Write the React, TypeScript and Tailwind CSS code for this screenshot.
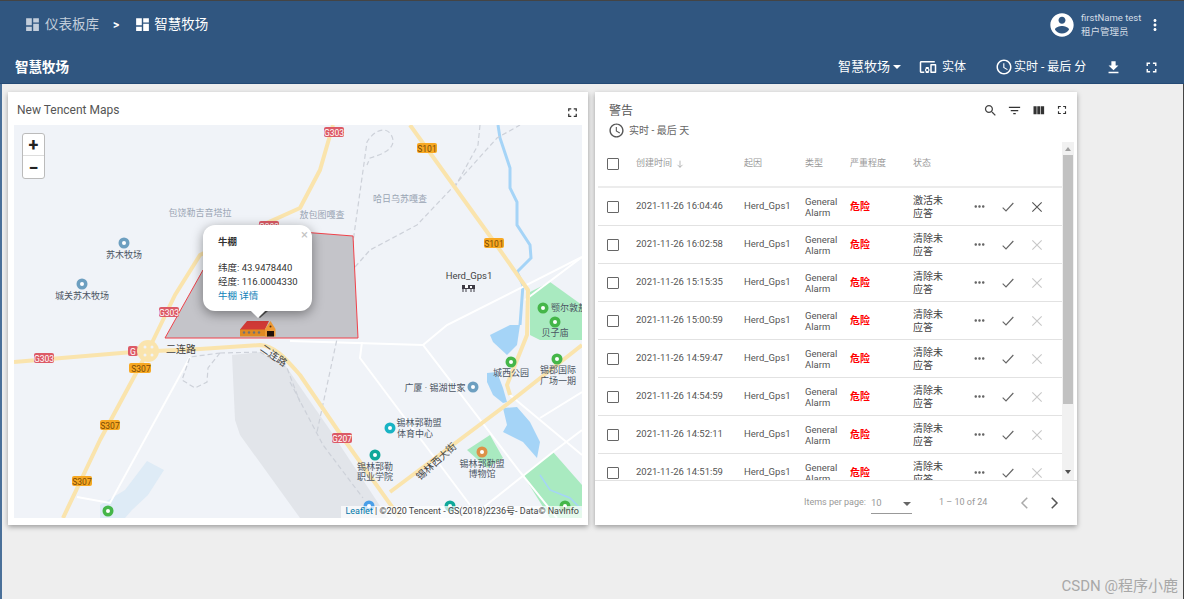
const P = {
  dashboard: "M3 13h8V3H3v10zm0 8h8v-6H3v6zm10 0h8V11h-8v10zm0-18v6h8V3h-8z",
  account: "M12 2C6.48 2 2 6.48 2 12s4.48 10 10 10 10-4.48 10-10S17.52 2 12 2zm0 3c1.66 0 3 1.34 3 3s-1.34 3-3 3-3-1.34-3-3 1.34-3 3-3zm0 14.2c-2.5 0-4.71-1.28-6-3.22.03-1.99 4-3.08 6-3.08 1.99 0 5.97 1.09 6 3.08-1.29 1.94-3.5 3.22-6 3.22z",
  moreVert: "M12 8c1.1 0 2-.9 2-2s-.9-2-2-2-2 .9-2 2 .9 2 2 2zm0 2c-1.1 0-2 .9-2 2s.9 2 2 2 2-.9 2-2-.9-2-2-2zm0 6c-1.1 0-2 .9-2 2s.9 2 2 2 2-.9 2-2-.9-2-2-2z",
  devices: "M3 6h18V4H3c-1.1 0-2 .9-2 2v12c0 1.1.9 2 2 2h4v-2H3V6zm10 6H9v1.78c-.61.55-1 1.33-1 2.22s.39 1.67 1 2.22V20h4v-1.78c.61-.55 1-1.34 1-2.22s-.39-1.67-1-2.22V12zm-2 5.5c-.83 0-1.5-.67-1.5-1.5s.67-1.5 1.5-1.5 1.5.67 1.5 1.5-.67 1.5-1.5 1.5zM22 8h-6c-.5 0-1 .5-1 1v10c0 .5.5 1 1 1h6c.5 0 1-.5 1-1V9c0-.5-.5-1-1-1zm-1 10h-4v-8h4v8z",
  clock: "M11.99 2C6.47 2 2 6.48 2 12s4.47 10 9.99 10C17.52 22 22 17.52 22 12S17.52 2 11.99 2zM12 20c-4.42 0-8-3.58-8-8s3.58-8 8-8 8 3.58 8 8-3.58 8-8 8zm.5-13H11v6l5.25 3.15.75-1.23-4.5-2.67z",
  download: "M19 9h-4V3H9v6H5l7 7 7-7zM5 18v2h14v-2H5z",
  fullscreen: "M7 14H5v5h5v-2H7v-3zm-2-4h2V7h3V5H5v5zm12 7h-3v2h5v-5h-2v3zM14 5v2h3v3h2V5h-5z",
  search: "M15.5 14h-.79l-.28-.27C15.41 12.59 16 11.11 16 9.5 16 5.91 13.09 3 9.5 3S3 5.91 3 9.5 5.91 16 9.5 16c1.61 0 3.09-.59 4.23-1.57l.27.28v.79l5 4.99L20.49 19l-4.99-5zm-6 0C7.01 14 5 11.99 5 9.5S7.01 5 9.5 5 14 7.01 14 9.5 11.99 14 9.5 14z",
  filter: "M10 18h4v-2h-4v2zM3 6v2h18V6H3zm3 7h12v-2H6v2z",
  columns: "M10 18h5V5h-5v13zm-6 0h5V5H4v13zM16 5v13h5V5h-5z",
  moreHoriz: "M6 10c-1.1 0-2 .9-2 2s.9 2 2 2 2-.9 2-2-.9-2-2-2zm12 0c-1.1 0-2 .9-2 2s.9 2 2 2 2-.9 2-2-.9-2-2-2zm-6 0c-1.1 0-2 .9-2 2s.9 2 2 2 2-.9 2-2-.9-2-2-2z",
};

const Icon = ({ d, className }: { d: string; className: string }) => (
  <svg viewBox="0 0 24 24" fill="currentColor" className={className}>
    <path d={d} />
  </svg>
);

const Line = ({ d, className, sw = 1.4 }: { d: string; className: string; sw?: number }) => (
  <svg viewBox="0 0 24 24" fill="none" stroke="currentColor" strokeWidth={sw} className={className}>
    <path d={d} />
  </svg>
);

const rows = [
  { time: "2021-11-26 16:04:46", status: "激活未应答", active: true },
  { time: "2021-11-26 16:02:58", status: "清除未应答", active: false },
  { time: "2021-11-26 15:15:35", status: "清除未应答", active: false },
  { time: "2021-11-26 15:00:59", status: "清除未应答", active: false },
  { time: "2021-11-26 14:59:47", status: "清除未应答", active: false },
  { time: "2021-11-26 14:54:59", status: "清除未应答", active: false },
  { time: "2021-11-26 14:52:11", status: "清除未应答", active: false },
  { time: "2021-11-26 14:51:59", status: "清除未应答", active: false },
];

const shields: [string, number, number][] = [
  ["G303", 334, 132],
  ["G303", 269, 226],
  ["G303", 169, 312],
  ["G303", 44, 358],
  ["S307", 141, 368],
  ["S307", 110, 425],
  ["S307", 82, 481],
  ["S101", 427, 148],
  ["S101", 494, 243],
  ["G207", 342, 438],
];

const labels: [string, number, number, string][] = [
  ["包饶勒吉音塔拉", 200, 216, "#9aa5b4"],
  ["苏木牧场", 124, 258, "#4b5563"],
  ["城关苏木牧场", 82, 299, "#4b5563"],
  ["敖包图嘎查", 322, 218, "#9aa5b4"],
  ["哈日乌苏嘎查", 400, 202, "#9aa5b4"],
  ["贝子庙", 555, 336, "#4b5563"],
  ["城西公园", 511, 376, "#4b5563"],
  ["锡郡国际", 558, 373, "#4b5563"],
  ["广场一期", 558, 384, "#4b5563"],
  ["广厦 · 锡湖世家", 435, 391, "#4b5563"],
  ["锡林郭勒盟", 419, 426, "#4b5563"],
  ["体育中心", 415, 437, "#4b5563"],
  ["锡林郭勒", 375, 470, "#4b5563"],
  ["职业学院", 375, 480, "#4b5563"],
  ["锡林郭勒盟", 482, 467, "#4b5563"],
  ["博物馆", 482, 477, "#4b5563"],
];

const pins: [number, number, string][] = [
  [124, 243, "#6d9fc0"],
  [82, 284, "#6d9fc0"],
  [543, 308, "#45b649"],
  [555, 322, "#45b649"],
  [511, 362, "#45b649"],
  [557, 359, "#45b649"],
  [473, 387, "#6d9fc0"],
  [390, 428, "#19b3c4"],
  [375, 455, "#0fa89a"],
  [482, 452, "#dd9147"],
  [369, 506, "#4a9fe8"],
  [450, 506, "#0fa89a"],
  [565, 506, "#45b649"],
  [108, 511, "#45b649"],
];

const MapDrawing = () => (
  <svg viewBox="14 125 568 393" className="block w-[568px] h-[393px]">
    <rect x="14" y="125" width="568" height="393" fill="#f0f3f8" />
    <path d="M232 355L260 352L285 365L330 430L388 518L300 518L240 435L235 420Z" fill="#e2e5ea" />
    <path d="M125 490L147 461L164 470L148 495L132 510L125 518L100 518L100 505Z" fill="#deebf6" />
    <path d="M530 292L550 282L582 305L582 340L540 340L530 335Z" fill="#a9eac0" />
    <path d="M523 475L553 452L582 485L582 518L550 518Z" fill="#a9eac0" />
    <path d="M467 450L490 435L503 458L487 468Z" fill="#a9eac0" />
    <g fill="#a5d4f7">
      <path d="M490 335L510 325L520 325L517 345L507 355L493 342Z" />
      <path d="M487 373L497 372L503 388L507 402L503 403L493 395L487 382Z" />
      <path d="M503 408L517 407L530 422L540 442L537 458L523 442L503 432L507 425Z" />
    </g>
    <path d="M498 125L500 138L510 168L510 188L517 202L517 225L530 245L531 258L517 272L523 285L520 325" fill="none" stroke="#a5d4f7" strokeWidth="3" />
    <path d="M540 475L550 490L570 498L582 510" fill="none" stroke="#a5d4f7" strokeWidth="1.5" />
    <g fill="none" stroke="#ffffff" strokeWidth="2">
      <path d="M190 357L110 503L77 497" />
      <path d="M290 341L423 345L520 472L557 518" />
      <path d="M423 345L447 325L582 257" />
      <path d="M362 342L360 358L470 505" />
      <path d="M510 395L582 455" />
      <path d="M470 518L553 452L582 430" />
      <path d="M540 418L582 392" />
      <path d="M525 300L582 257" />
    </g>
    <g fill="none" stroke="#cdd1d9" strokeWidth="1.2" strokeDasharray="5 3">
      <path d="M340 325L353 242L367 142C375 128 390 125 393 140C394 150 380 155 370 158L367 165" />
      <path d="M355 267L370 250L417 225L453 187L497 138L520 125" />
      <path d="M480 125L478 145L455 187" />
      <path d="M340 325L317 432" />
      <path d="M290 382L323 445L363 498" />
      <path d="M220 353L260 352L287 368L300 402" />
      <path d="M220 353L208 368L207 382L195 388L182 380L190 357L220 353" />
    </g>
    <g fill="none" stroke="#fae4ad" strokeWidth="4" strokeLinejoin="round">
      <path d="M14 362L133 352L200 349L260 345C275 346 285 358 300 375L343 438L400 518" />
      <path d="M148 351L175 295L200 255L240 235L300 208L320 170L333 125" />
      <path d="M410 125L495 243L528 290L527 335L507 385L510 395" />
      <path d="M148 351L100 440L63 518" />
      <path d="M390 492L510 402L582 345" />
    </g>
    <rect x="128" y="346" width="10" height="10" rx="2" fill="#dc5a66" />
    <text x="130" y="354.5" fontSize="8.5" fill="#ffffff">G</text>
    <rect x="129" y="363" width="14" height="10" rx="2" fill="#f7a823" />
    <circle cx="148" cy="351" r="11" fill="#fae4ad" />
    <circle cx="145" cy="347" r="1.5" fill="#f0f3f8" />
    <circle cx="152" cy="347" r="1.5" fill="#f0f3f8" />
    <circle cx="145" cy="355" r="1.5" fill="#f0f3f8" />
    <circle cx="152" cy="355" r="1.5" fill="#f0f3f8" />
    <path d="M250 228L353 236L358 338L165 338L203 270Z" fill="#c4c4c9" stroke="#f0424a" strokeWidth="1" />
    {shields.map(([t, x, y], i) => (
      <g key={i}>
        <rect x={x - 10} y={y - 5} width="20" height="10" rx="2" fill={t[0] === "G" ? "#dc5a66" : "#f7a823"} />
        <text x={x} y={y + 3.5} textAnchor="middle" fontSize="8.5" fill={t[0] === "G" ? "#ffffff" : "#7a4a05"}>
          {t}
        </text>
      </g>
    ))}
    {pins.map(([x, y, c], i) => (
      <g key={i}>
        <circle cx={x} cy={y} r="5.5" fill={c} />
        <circle cx={x} cy={y} r="2" fill="#ffffff" />
      </g>
    ))}
    {labels.map(([t, x, y, c], i) => (
      <text key={i} x={x} y={y} textAnchor="middle" fontSize="9" fill={c}>
        {t}
      </text>
    ))}
    <text x="551" y="311" fontSize="9" fill="#4b5563">颚尔敦敖</text>
    <text x="181" y="353" textAnchor="middle" fontSize="10" fill="#444444">二连路</text>
    <text x="274" y="359" textAnchor="middle" fontSize="10" fill="#444444" transform="rotate(35 274 355)">二连路</text>
    <text x="436" y="465" textAnchor="middle" fontSize="10" fill="#444444" transform="rotate(-42 436 461)">锡林西大街</text>
    <text x="469" y="279" textAnchor="middle" fontSize="9.5" fill="#444444">Herd_Gps1</text>
    <g>
      <rect x="462" y="285" width="13" height="4" fill="#3d3a45" />
      <rect x="465" y="285" width="3" height="3" fill="#ffffff" />
      <rect x="470" y="286" width="2" height="2" fill="#ffffff" />
      <path d="M463 289v3M466 289v3M471 289v3M474 289v3" stroke="#3d3a45" strokeWidth="1" />
    </g>
    <g>
      <rect x="240" y="329" width="28" height="7.5" fill="#e08a23" />
      <path d="M240 329.5L247 321L269 321L265 329.5Z" fill="#d13a36" />
      <path d="M265 336.5L265 329L270.5 321L275.5 329L275.5 336.5Z" fill="#ee9a35" />
      <rect x="267" y="331" width="7" height="5.5" fill="#231208" />
      <circle cx="270.5" cy="326.5" r="1" fill="#5a3210" />
      <g fill="#6f7178">
        <circle cx="244" cy="332.5" r="1.2" />
        <circle cx="249" cy="332.5" r="1.2" />
        <circle cx="254" cy="332.5" r="1.2" />
        <circle cx="259" cy="332.5" r="1.2" />
      </g>
    </g>
  </svg>
);

const Header = () => (
  <header className="h-[84px] bg-[#305680] border-t border-[#444444] border-b border-b-[#244a75] text-white">
    <div className="h-[47px] flex items-center pl-[26px] pr-[20px]">
      <Icon d={P.dashboard} className="w-[17px] h-[17px] -ml-[2px] text-[#c3cedb]" />
      <span className="ml-[4px] text-[13.5px] text-[#c3cedb]">仪表板库</span>
      <span className="ml-[14px] text-[12px] font-bold">&gt;</span>
      <Icon d={P.dashboard} className="ml-[15px] w-[17px] h-[17px]" />
      <span className="ml-[3px] text-[13.5px]">智慧牧场</span>
      <Icon d={P.account} className="ml-auto w-[28px] h-[28px]" />
      <div className="ml-[5px] w-[64px] leading-[14px] text-[9.5px] text-[#d5dde6]">
        <div>firstName test</div>
        <div>租户管理员</div>
      </div>
      <Icon d={P.moreVert} className="ml-[1px] w-[18px] h-[18px]" />
    </div>
    <div className="h-[38px] flex items-center pl-[15px] text-[13px]">
      <span className="text-[13.5px] font-bold">智慧牧场</span>
      <span className="ml-[769px]">智慧牧场</span>
      <span className="ml-[3px] w-0 h-0 border-x-[4px] border-x-transparent border-t-[4px] border-t-white" />
      <Icon d={P.devices} className="ml-[18px] w-[18px] h-[18px]" />
      <span className="ml-[5px] text-[12px]">实体</span>
      <Icon d={P.clock} className="ml-[29px] w-[18px] h-[18px]" />
      <span className="ml-[1px] text-[12px]">实时 - 最后 分</span>
      <Icon d={P.download} className="ml-[19px] w-[17px] h-[17px]" />
      <Icon d={P.fullscreen} className="ml-[21px] w-[17px] h-[17px]" />
    </div>
  </header>
);

const MapCard = () => (
  <section className="w-[580px] h-[433px] bg-white shadow-[0_2px_5px_rgba(0,0,0,0.35)] px-[6px]">
    <div className="h-[33px] flex justify-between pl-[3px] pr-[3px] pt-[9px]">
      <span className="text-[12px] leading-[18px] text-[#555555]">New Tencent Maps</span>
      <Icon d={P.fullscreen} className="-mr-[1px] mt-[4px] w-[15px] h-[15px] text-[#333333]" />
    </div>
    <div className="relative w-[568px] h-[393px] overflow-hidden">
      <MapDrawing />
      <div className="absolute left-[8px] top-[8px] w-[23px] rounded-[3px] border border-[#bbbbbb] bg-white text-[#222222]">
        <div className="h-[22px] flex items-center justify-center text-[18px] font-bold border-b border-[#dddddd]">+</div>
        <div className="h-[22px] flex items-center justify-center text-[18px] font-bold">−</div>
      </div>
      <span className="absolute left-[238px] top-[186px] w-0 h-0 border-x-[8px] border-x-transparent border-t-[7px] border-t-[#555555]" />
      <div className="absolute left-[189px] top-[100px] w-[109px] h-[86px] rounded-[12px] bg-white shadow-[0_3px_12px_rgba(0,0,0,0.4)] pl-[15px] pt-[10px] text-[9.5px] leading-[14px] text-[#333333]">
        <div className="font-bold">牛棚</div>
        <div className="mt-[12px]">纬度: 43.9478440</div>
        <div>经度: 116.0004330</div>
        <div className="text-[#0f7fb8]">牛棚 详情</div>
        <span className="absolute right-[4px] top-[3px] text-[13px] text-[#c3c3c3]">×</span>
        <span className="absolute left-[50px] -bottom-[5px] w-[10px] h-[10px] rotate-45 bg-white" />
      </div>
      <div className="absolute right-0 bottom-0 h-[12px] flex items-center bg-white/70 pl-[4px] pr-[3px] text-[9px] text-[#444444] whitespace-nowrap">
        <span className="text-[#0078a8]">Leaflet</span>
        <span>&nbsp;| ©2020 Tencent - GS(2018)2236号- Data© NavInfo</span>
      </div>
    </div>
  </section>
);

const AlarmRow = ({ time, status, active }: { time: string; status: string; active: boolean }) => (
  <div className="h-[38px] shrink-0 flex items-center border-b border-[#e2e2e2] pl-[9px] text-[9.5px] text-[#555555]">
    <span className="w-[12px] h-[12px] border-[1.5px] border-[#666666] rounded-[1px]" />
    <span className="ml-[17px] w-[108px]">{time}</span>
    <span className="w-[61px]">Herd_Gps1</span>
    <span className="w-[45px] leading-[11px]">General Alarm</span>
    <span className="w-[63px] text-[10px] font-bold text-[#ff0000]">危险</span>
    <span className="w-[31px] text-[10px] leading-[13px] text-[#444444]">{status}</span>
    <Icon d={P.moreHoriz} className="ml-[28px] w-[15px] h-[15px] text-[#666666]" />
    <Line d="M4 13L9 18L20 6" className="ml-[13px] w-[16px] h-[16px] text-[#666666]" sw={1.7} />
    <Line
      d="M5 5L19 19M19 5L5 19"
      sw={1.7}
      className={active ? "ml-[13px] w-[16px] h-[16px] text-[#555555]" : "ml-[13px] w-[16px] h-[16px] text-[#c8c8c8]"}
    />
  </div>
);

const AlarmCard = () => (
  <section className="w-[482px] h-[433px] bg-white shadow-[0_2px_5px_rgba(0,0,0,0.35)] flex flex-col">
    <div className="h-[50px] shrink-0 flex justify-between pl-[14px] pr-[8px] pt-[10px]">
      <div>
        <div className="text-[12px] leading-[18px] text-[#555555]">警告</div>
        <div className="flex items-center mt-[2px] text-[10px] text-[#666666]">
          <Icon d={P.clock} className="-ml-[1px] w-[17px] h-[17px] text-[#555555]" />
          <span className="ml-[4px]">实时 - 最后 天</span>
        </div>
      </div>
      <div className="flex gap-[9px] mt-[1px]">
        <Icon d={P.search} className="ml-[1px] w-[15px] h-[15px] text-[#444444]" />
        <Icon d={P.filter} className="w-[15px] h-[15px] text-[#333333]" />
        <Icon d={P.columns} className="w-[15px] h-[15px] text-[#333333]" />
        <Icon d={P.fullscreen} className="w-[14px] h-[14px] text-[#333333]" />
      </div>
    </div>
    <div className="h-[339px] shrink-0 flex pl-[3px] pr-[3px] overflow-hidden border-b border-[#e2e2e2]">
      <div className="w-[464px] shrink-0 flex flex-col">
        <div className="h-[46px] shrink-0 flex items-center border-b-2 border-[#ececec] pl-[9px] text-[9px] text-[#999999]">
          <span className="w-[12px] h-[12px] border-[1.5px] border-[#666666] rounded-[1px]" />
          <span className="ml-[17px] w-[108px] flex items-center">
            创建时间
            <Line d="M12 4V20M6 14L12 20L18 14" className="ml-[3px] w-[10px] h-[10px] text-[#888888]" />
          </span>
          <span className="w-[61px]">起因</span>
          <span className="w-[45px]">类型</span>
          <span className="w-[63px]">严重程度</span>
          <span>状态</span>
        </div>
        {rows.map((r) => (
          <AlarmRow key={r.time} {...r} />
        ))}
      </div>
      <div className="w-[12px] shrink-0 flex flex-col items-center bg-[#f1f1f1]">
        <span className="mt-[5px] h-0 w-0 border-x-[3px] border-x-transparent border-b-[4px] border-b-[#a0a0a0]" />
        <span className="mt-[4px] w-[10px] h-[249px] bg-[#c1c1c1]" />
        <span className="mt-auto mb-[6px] h-0 w-0 border-x-[3px] border-x-transparent border-t-[4px] border-t-[#505050]" />
      </div>
    </div>
    <div className="flex-1 flex items-center pl-[209px] text-[9px] text-[#999999]">
      <span>Items per page:</span>
      <div className="ml-[5px] w-[41px] h-[19px] mt-[2px] flex items-center justify-between border-b border-[#999999] text-[9.5px] pr-[1px]">
        <span>10</span>
        <span className="h-0 w-0 border-x-[4px] border-x-transparent border-t-[4px] border-t-[#666666]" />
      </div>
      <span className="ml-[27px]">1 – 10 of 24</span>
      <Line d="M15 5L8 12L15 19" sw={2} className="ml-[29px] w-[18px] h-[18px] text-[#aaaaaa]" />
      <Line d="M9 5L16 12L9 19" sw={2} className="ml-[11px] w-[18px] h-[18px] text-[#555555]" />
    </div>
  </section>
);

export default function App() {
  return (
    <div className="relative h-[599px] overflow-hidden bg-[#eeeeee] font-[family-name:Roboto,'Noto_Sans_CJK_SC',sans-serif]">
      <Header />
      <main className="h-[515px] flex gap-[7px] pl-[6px] pt-[8px] border-l-2 border-[#4a7099] border-r border-r-[#444444]">
        <MapCard />
        <AlarmCard />
      </main>
      <span className="absolute right-[6px] bottom-[4px] text-[15px] leading-[18px] text-[#a8a8a8]">CSDN @程序小鹿</span>
    </div>
  );
}
